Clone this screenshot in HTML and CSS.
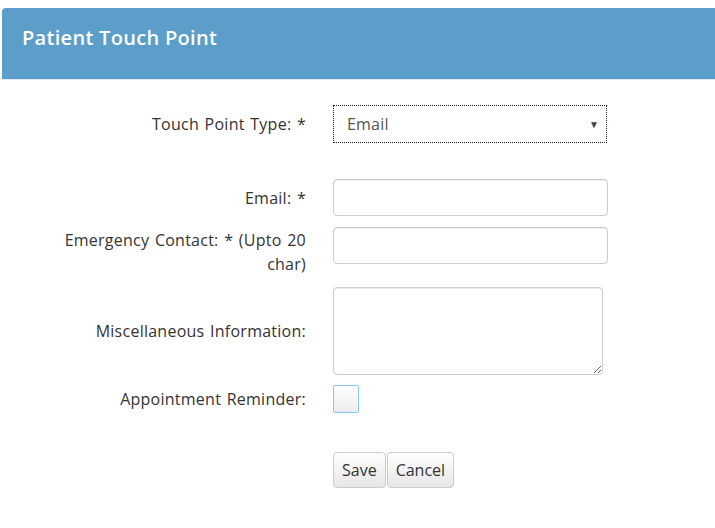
FILE: index.html
```html
<!DOCTYPE html>
<html>
<head>
<meta charset="utf-8">
<link rel="stylesheet" href="styles.css">
</head>
<body>
<div class="page">
  <div class="header"><h1 class="title">Patient Touch Point</h1></div>
  <form class="form">
    <div class="row row-type">
      <label class="label">Touch Point Type: *</label>
      <div class="control">
        <div class="select"><span class="select-value">Email</span><span class="caret">▼</span></div>
      </div>
    </div>
    <div class="row row-email">
      <label class="label">Email: *</label>
      <div class="control"><input class="input" type="text"></div>
    </div>
    <div class="row row-emerg">
      <label class="label label-wrap">Emergency Contact: * (Upto 20 char)</label>
      <div class="control"><input class="input" type="text"></div>
    </div>
    <div class="row row-misc">
      <label class="label">Miscellaneous Information:</label>
      <div class="control"><textarea class="textarea"></textarea></div>
    </div>
    <div class="row row-check">
      <label class="label">Appointment Reminder:</label>
      <div class="control"><span class="checkbox"></span></div>
    </div>
    <div class="row row-buttons">
      <span></span>
      <div class="control buttons">
        <button type="button" class="btn">Save</button>
        <button type="button" class="btn">Cancel</button>
      </div>
    </div>
  </form>
</div>
</body>
</html>
```
FILE: styles.css
```css
html, body {
  margin: 0;
  padding: 0;
  background: #fff;
}
body {
  font-family: "Open Sans", "Noto Sans", sans-serif;
  color: #333;
  font-size: 16px;
}
.page {
  padding: 8px 0 0 2px;
}
.header {
  background: #5a9ec9;
  height: 71px;
  border-top-left-radius: 4px;
  border-bottom: 1px solid #e3e8ec;
  padding: 0 0 0 20px;
}
.title {
  margin: 0;
  padding-top: 16px;
  font-size: 20px;
  font-weight: 600;
  color: #fff;
  line-height: 28px;
  letter-spacing: 0.3px;
}
.form {
  padding-top: 25px;
}
.row {
  display: grid;
  grid-template-columns: 304px 1fr;
  column-gap: 27px;
  align-items: center;
}
.label {
  text-align: right;
  line-height: 24px;
  letter-spacing: 0.25px;
  word-spacing: 1.2px;
}
.label-wrap {
  padding-left: 50px;
}
.row-email { margin-top: 36px; }
.row-emerg {
  margin-top: 11px;
  height: 37px;
  align-items: start;
}
.row-emerg .label { margin-top: 1px; }
.row-misc { margin-top: 23px; }
.row-check { margin-top: 10px; }
.row-buttons { margin-top: 39px; }

.select {
  box-sizing: border-box;
  width: 274px;
  height: 38px;
  border: 1px dotted #222;
  display: flex;
  align-items: center;
  justify-content: space-between;
  padding: 0 7px 0 13px;
  color: #555;
  font-size: 16px;
  letter-spacing: 0.2px;
}
.caret {
  font-size: 10px;
  color: #444;
}
.input {
  box-sizing: border-box;
  display: block;
  width: 275px;
  height: 37px;
  border: 1px solid #ccc;
  border-radius: 4px;
  box-shadow: inset 0 1px 1px rgba(0,0,0,0.075);
  margin: 0;
  font: inherit;
}
.textarea {
  box-sizing: border-box;
  display: block;
  width: 270px;
  height: 88px;
  border: 1px solid #ccc;
  border-radius: 4px;
  box-shadow: inset 0 1px 1px rgba(0,0,0,0.075);
  margin: 0;
  font: inherit;
}
.checkbox {
  box-sizing: border-box;
  display: block;
  width: 26px;
  height: 28px;
  border: 1px solid #86c9ee;
  border-radius: 2px;
  background: linear-gradient(#fff, #ececec);
}
.buttons {
  display: flex;
  gap: 1px;
}
.btn {
  box-sizing: border-box;
  height: 36px;
  padding: 0 8px;
  border: 1px solid #ccc;
  border-radius: 4px;
  background: linear-gradient(#fff, #e6e6e6);
  font-family: "Open Sans", "Noto Sans", sans-serif;
  font-size: 16px;
  color: #333;
  margin: 0;
}
```
